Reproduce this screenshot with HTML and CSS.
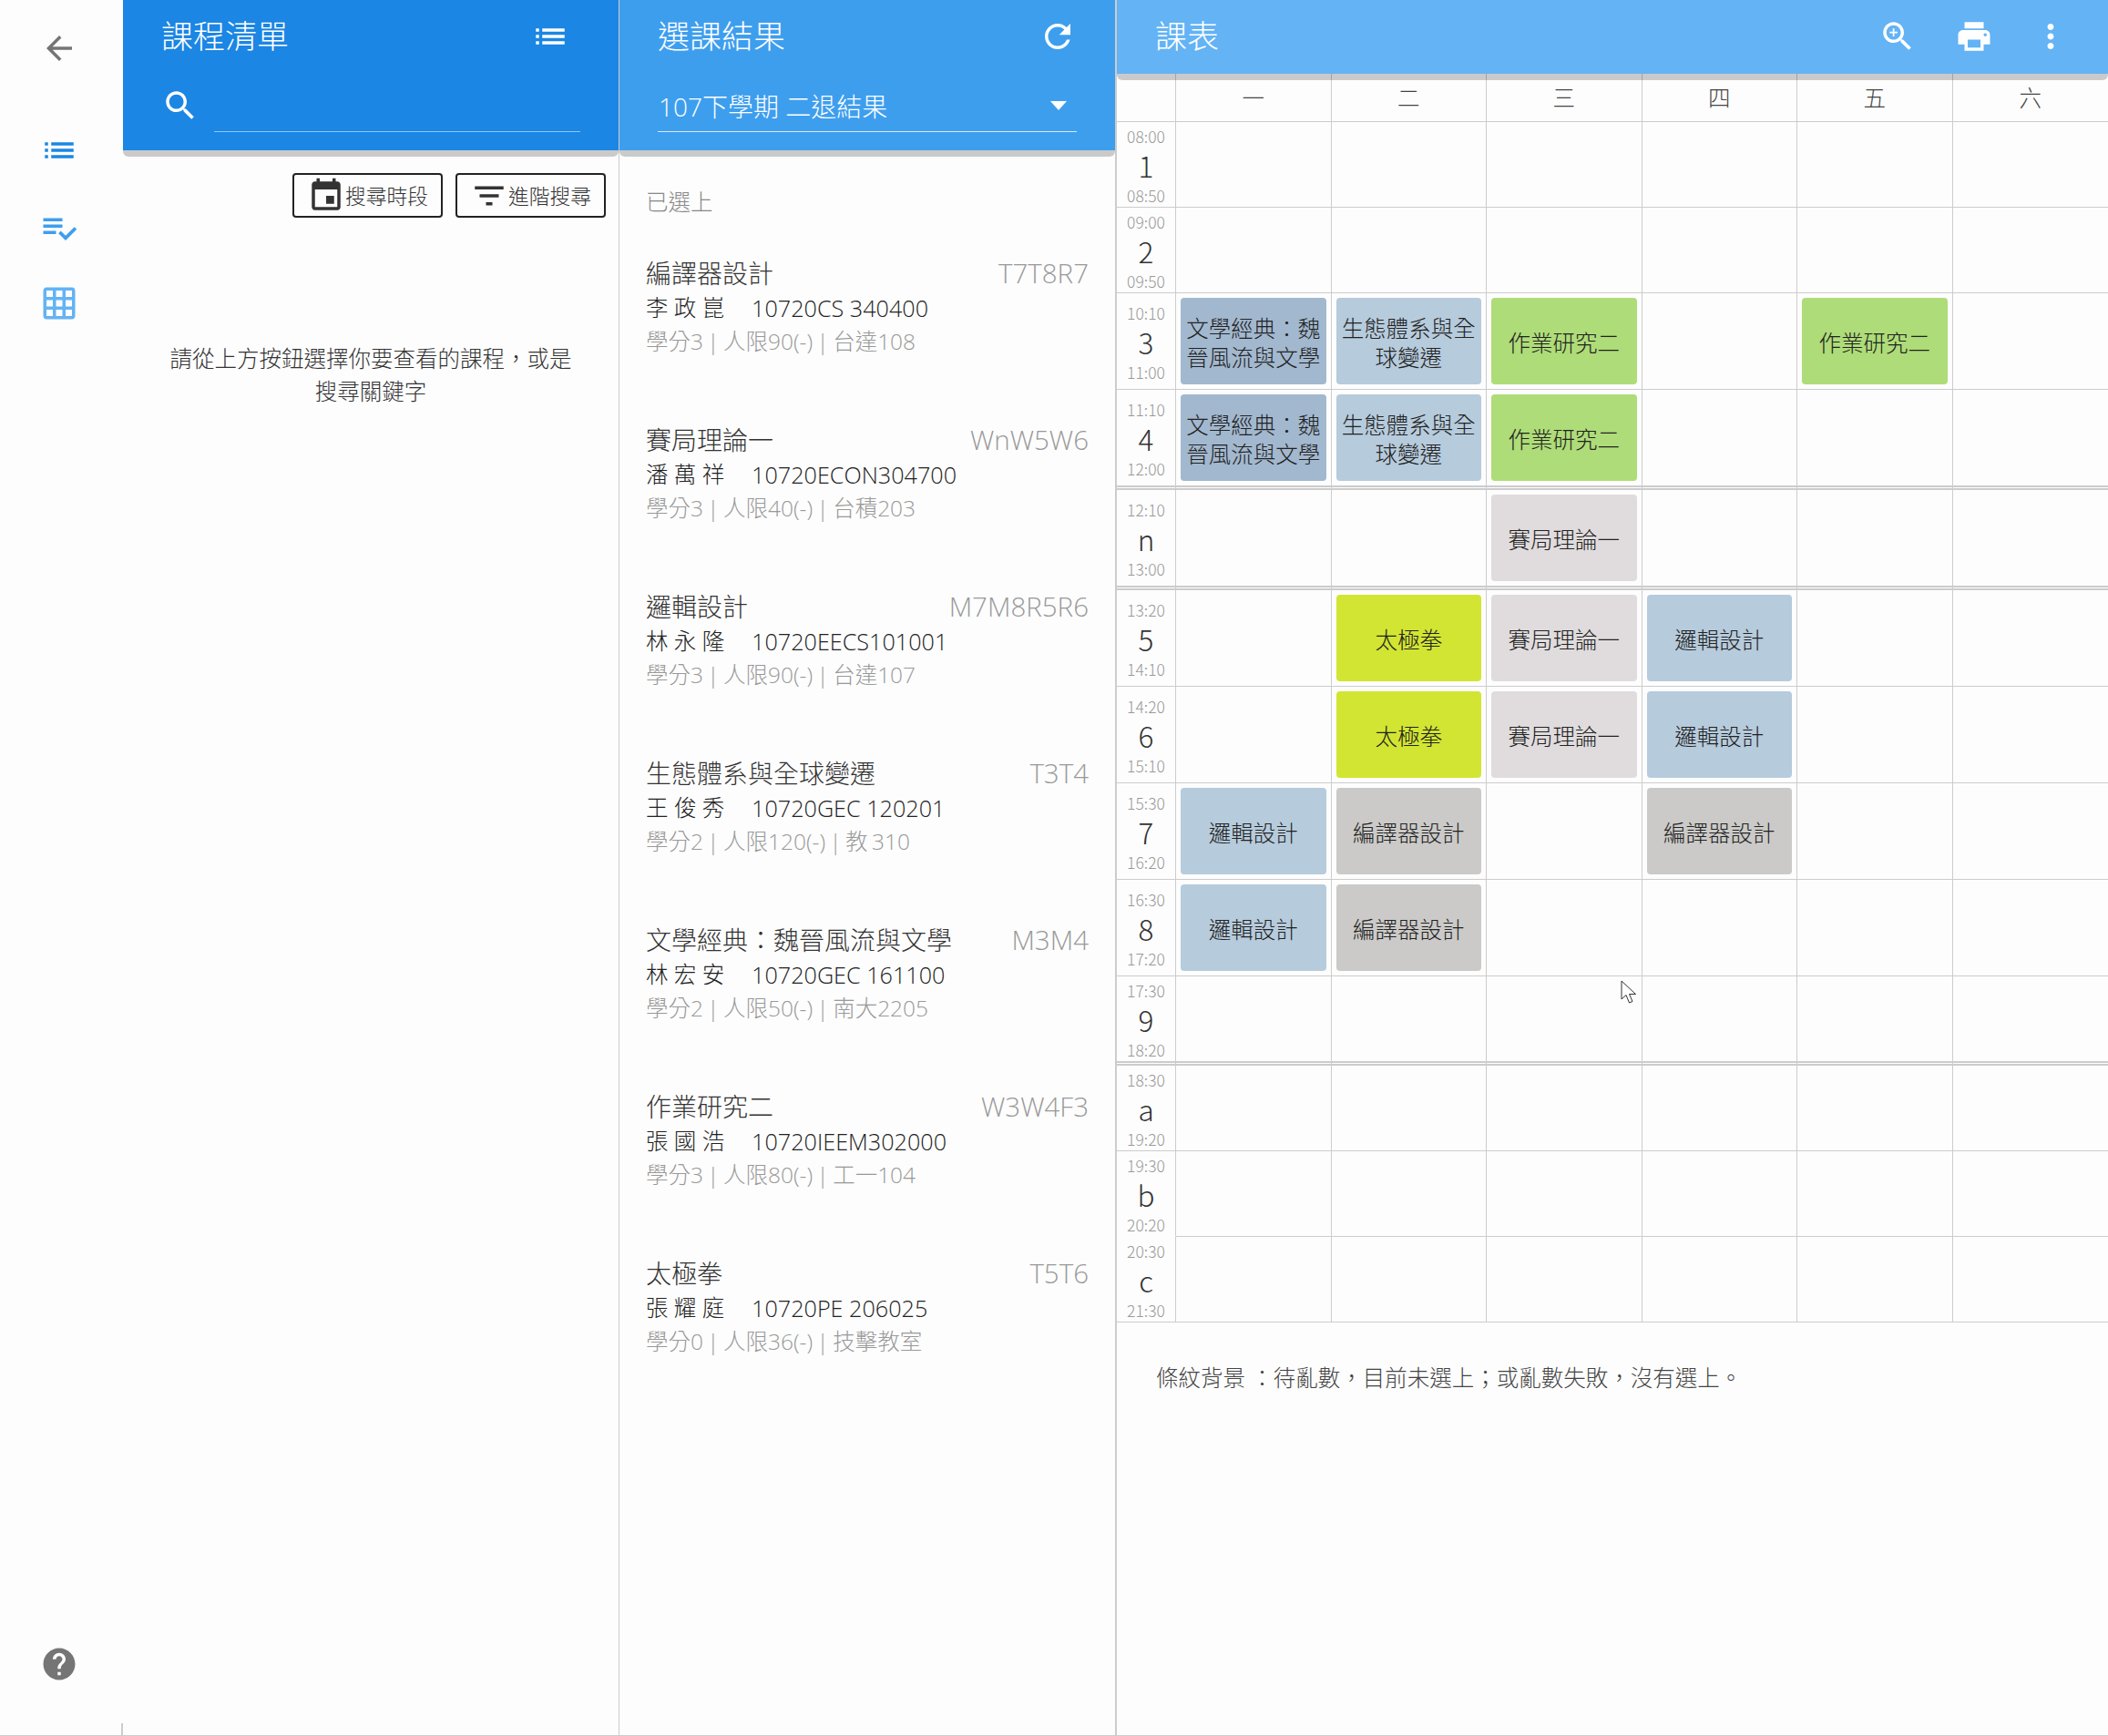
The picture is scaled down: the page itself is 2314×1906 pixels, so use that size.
FILE: index.html
```html
<!DOCTYPE html>
<html lang="zh-Hant">

<head>
  <meta charset="UTF-8">
  <title>課表</title>
  <link rel="stylesheet" href="styles.css">
</head>

<body>
  <div class="app">
    <nav class="sidebar">
      <svg class="icon back" viewBox="0 0 24 24"><path d="M20 11H7.83l5.59-5.59L12 4l-8 8 8 8 1.41-1.41L7.83 13H20v-2z"/></svg>
      <svg class="icon nav-list" viewBox="0 0 24 24"><path d="M3 13h2v-2H3v2zm0 4h2v-2H3v2zm0-8h2V7H3v2zm4 4h14v-2H7v2zm0 4h14v-2H7v2zM7 7v2h14V7H7z"/></svg>
      <svg class="icon nav-check" viewBox="0 0 24 24"><path d="M14 10H2v2h12v-2zm0-4H2v2h12V6zM2 16h8v-2H2v2zm19.5-4.5L23 13l-6.99 7-4.51-4.5L13 14l3.01 3 5.49-5.5z"/></svg>
      <svg class="icon nav-grid" viewBox="0 0 24 24"><path d="M20 2H4c-1.1 0-2 .9-2 2v16c0 1.1.9 2 2 2h16c1.1 0 2-.9 2-2V4c0-1.1-.9-2-2-2zM8 20H4v-4h4v4zm0-6H4v-4h4v4zm0-6H4V4h4v4zm6 12h-4v-4h4v4zm0-6h-4v-4h4v4zm0-6h-4V4h4v4zm6 12h-4v-4h4v4zm0-6h-4v-4h4v4zm0-6h-4V4h4v4z"/></svg>
      <svg class="icon help" viewBox="0 0 24 24"><path d="M12 2C6.48 2 2 6.48 2 12s4.48 10 10 10 10-4.48 10-10S17.52 2 12 2zm1 17h-2v-2h2v2zm2.07-7.75l-.9.92C13.45 12.9 13 13.5 13 15h-2v-.5c0-1.1.45-2.1 1.17-2.83l1.24-1.26c.37-.36.59-.86.59-1.41 0-1.1-.9-2-2-2s-2 .9-2 2H8c0-2.21 1.79-4 4-4s4 1.79 4 4c0 .88-.36 1.68-.93 2.25z"/></svg>
    </nav>

    <section class="panel panel-courses">
      <header class="bar bar-tall bar-dark">
        <div class="bar-row">
          <h2>課程清單</h2>
          <svg class="icon" viewBox="0 0 24 24"><path d="M3 13h2v-2H3v2zm0 4h2v-2H3v2zm0-8h2V7H3v2zm4 4h14v-2H7v2zm0 4h14v-2H7v2zM7 7v2h14V7H7z"/></svg>
        </div>
        <div class="search">
          <svg class="icon" viewBox="0 0 24 24"><path d="M15.5 14h-.79l-.28-.27C15.41 12.59 16 11.11 16 9.5 16 5.91 13.09 3 9.5 3S3 5.91 3 9.5 5.91 16 9.5 16c1.61 0 3.09-.59 4.23-1.57l.27.28v.79l5 4.99L20.49 19l-4.99-5zm-6 0C7.01 14 5 11.99 5 9.5S7.01 5 9.5 5 14 7.01 14 9.5 11.99 14 9.5 14z"/></svg>
          <div class="search-line"></div>
        </div>
      </header>
      <div class="actions">
        <button class="btn">
          <svg class="icon" viewBox="0 0 24 24"><path d="M17 12h-5v5h5v-5zM16 1v2H8V1H6v2H5c-1.11 0-1.99.9-1.99 2L3 19c0 1.1.89 2 2 2h14c1.1 0 2-.9 2-2V5c0-1.1-.9-2-2-2h-1V1h-2zm3 18H5V8h14v11z"/></svg>
          搜尋時段
        </button>
        <button class="btn">
          <svg class="icon" viewBox="0 0 24 24"><path d="M10 18h4v-2h-4v2zM3 6v2h18V6H3zm3 7h12v-2H6v2z"/></svg>
          進階搜尋
        </button>
      </div>
      <p class="hint">請從上方按鈕選擇你要查看的課程，或是搜尋關鍵字</p>
    </section>

    <section class="panel panel-results">
      <header class="bar bar-tall bar-mid">
        <div class="bar-row">
          <h2>選課結果</h2>
          <svg class="icon" viewBox="0 0 24 24"><path d="M17.65 6.35C16.2 4.9 14.21 4 12 4c-4.42 0-7.99 3.58-7.99 8s3.57 8 7.99 8c3.73 0 6.84-2.55 7.73-6h-2.08c-.82 2.33-3.04 4-5.65 4-3.31 0-6-2.69-6-6s2.69-6 6-6c1.66 0 3.14.69 4.22 1.78L13 11h7V4l-2.35 2.35z"/></svg>
        </div>
        <div class="select">
          <span>107下學期 二退結果</span>
          <i class="caret"></i>
        </div>
      </header>
      <div class="results">
        <h3 class="group">已選上</h3>
        <article class="course">
          <div class="course-top"><span class="course-name">編譯器設計</span><span class="course-time">T7T8R7</span></div>
          <div class="course-mid"><span class="teacher">李 政 崑</span><span class="course-code">10720CS 340400</span></div>
          <div class="course-info">學分3 | 人限90(-) | 台達108</div>
        </article>
        <article class="course">
          <div class="course-top"><span class="course-name">賽局理論一</span><span class="course-time">WnW5W6</span></div>
          <div class="course-mid"><span class="teacher">潘 萬 祥</span><span class="course-code">10720ECON304700</span></div>
          <div class="course-info">學分3 | 人限40(-) | 台積203</div>
        </article>
        <article class="course">
          <div class="course-top"><span class="course-name">邏輯設計</span><span class="course-time">M7M8R5R6</span></div>
          <div class="course-mid"><span class="teacher">林 永 隆</span><span class="course-code">10720EECS101001</span></div>
          <div class="course-info">學分3 | 人限90(-) | 台達107</div>
        </article>
        <article class="course">
          <div class="course-top"><span class="course-name">生態體系與全球變遷</span><span class="course-time">T3T4</span></div>
          <div class="course-mid"><span class="teacher">王 俊 秀</span><span class="course-code">10720GEC 120201</span></div>
          <div class="course-info">學分2 | 人限120(-) | 教 310</div>
        </article>
        <article class="course">
          <div class="course-top"><span class="course-name">文學經典：魏晉風流與文學</span><span class="course-time">M3M4</span></div>
          <div class="course-mid"><span class="teacher">林 宏 安</span><span class="course-code">10720GEC 161100</span></div>
          <div class="course-info">學分2 | 人限50(-) | 南大2205</div>
        </article>
        <article class="course">
          <div class="course-top"><span class="course-name">作業研究二</span><span class="course-time">W3W4F3</span></div>
          <div class="course-mid"><span class="teacher">張 國 浩</span><span class="course-code">10720IEEM302000</span></div>
          <div class="course-info">學分3 | 人限80(-) | 工一104</div>
        </article>
        <article class="course">
          <div class="course-top"><span class="course-name">太極拳</span><span class="course-time">T5T6</span></div>
          <div class="course-mid"><span class="teacher">張 耀 庭</span><span class="course-code">10720PE 206025</span></div>
          <div class="course-info">學分0 | 人限36(-) | 技擊教室</div>
        </article>
      </div>
    </section>

    <section class="panel panel-table">
      <header class="bar bar-light">
        <div class="bar-row">
          <h2>課表</h2>
          <div class="bar-icons">
            <svg class="icon" viewBox="0 0 24 24"><path d="M15.5 14h-.79l-.28-.27C15.41 12.59 16 11.11 16 9.5 16 5.91 13.09 3 9.5 3S3 5.91 3 9.5 5.91 16 9.5 16c1.61 0 3.09-.59 4.23-1.57l.27.28v.79l5 4.99L20.49 19l-4.99-5zm-6 0C7.01 14 5 11.99 5 9.5S7.01 5 9.5 5 14 7.01 14 9.5 11.99 14 9.5 14z"/><path d="M12 10h-2v2H9v-2H7V9h2V7h1v2h2v1z"/></svg>
            <svg class="icon" viewBox="0 0 24 24"><path d="M19 8H5c-1.66 0-3 1.34-3 3v6h4v4h12v-4h4v-6c0-1.66-1.34-3-3-3zm-3 11H8v-5h8v5zm3-7c-.55 0-1-.45-1-1s.45-1 1-1 1 .45 1 1-.45 1-1 1zm-1-9H6v4h12V3z"/></svg>
            <svg class="icon" viewBox="0 0 24 24"><path d="M12 8c1.1 0 2-.9 2-2s-.9-2-2-2-2 .9-2 2 .9 2 2 2zm0 2c-1.1 0-2 .9-2 2s.9 2 2 2 2-.9 2-2-.9-2-2-2zm0 6c-1.1 0-2 .9-2 2s.9 2 2 2 2-.9 2-2-.9-2-2-2z"/></svg>
          </div>
        </div>
      </header>

      <table class="timetable">
        <thead>
          <tr><th class="time"></th><th>一</th><th>二</th><th>三</th><th>四</th><th>五</th><th>六</th></tr>
        </thead>
        <tbody>
          <tr>
            <td class="time"><small>08:00</small><b>1</b><small>08:50</small></td>
            <td></td><td></td><td></td><td></td><td></td><td></td>
          </tr>
          <tr>
            <td class="time"><small>09:00</small><b>2</b><small>09:50</small></td>
            <td></td><td></td><td></td><td></td><td></td><td></td>
          </tr>
          <tr>
            <td class="time"><small>10:10</small><b>3</b><small>11:00</small></td>
            <td><div class="card c-lit">文學經典：魏晉風流與文學</div></td>
            <td><div class="card c-eco">生態體系與全球變遷</div></td>
            <td><div class="card c-or">作業研究二</div></td>
            <td></td>
            <td><div class="card c-or">作業研究二</div></td>
            <td></td>
          </tr>
          <tr class="break">
            <td class="time"><small>11:10</small><b>4</b><small>12:00</small></td>
            <td><div class="card c-lit">文學經典：魏晉風流與文學</div></td>
            <td><div class="card c-eco">生態體系與全球變遷</div></td>
            <td><div class="card c-or">作業研究二</div></td>
            <td></td><td></td><td></td>
          </tr>
          <tr class="break">
            <td class="time"><small>12:10</small><b>n</b><small>13:00</small></td>
            <td></td><td></td>
            <td><div class="card c-game">賽局理論一</div></td>
            <td></td><td></td><td></td>
          </tr>
          <tr>
            <td class="time"><small>13:20</small><b>5</b><small>14:10</small></td>
            <td></td>
            <td><div class="card c-tai">太極拳</div></td>
            <td><div class="card c-game">賽局理論一</div></td>
            <td><div class="card c-logic">邏輯設計</div></td>
            <td></td><td></td>
          </tr>
          <tr>
            <td class="time"><small>14:20</small><b>6</b><small>15:10</small></td>
            <td></td>
            <td><div class="card c-tai">太極拳</div></td>
            <td><div class="card c-game">賽局理論一</div></td>
            <td><div class="card c-logic">邏輯設計</div></td>
            <td></td><td></td>
          </tr>
          <tr>
            <td class="time"><small>15:30</small><b>7</b><small>16:20</small></td>
            <td><div class="card c-logic">邏輯設計</div></td>
            <td><div class="card c-comp">編譯器設計</div></td>
            <td></td>
            <td><div class="card c-comp">編譯器設計</div></td>
            <td></td><td></td>
          </tr>
          <tr>
            <td class="time"><small>16:30</small><b>8</b><small>17:20</small></td>
            <td><div class="card c-logic">邏輯設計</div></td>
            <td><div class="card c-comp">編譯器設計</div></td>
            <td></td><td></td><td></td><td></td>
          </tr>
          <tr class="break">
            <td class="time"><small>17:30</small><b>9</b><small>18:20</small></td>
            <td></td><td></td><td></td><td></td><td></td><td></td>
          </tr>
          <tr>
            <td class="time"><small>18:30</small><b>a</b><small>19:20</small></td>
            <td></td><td></td><td></td><td></td><td></td><td></td>
          </tr>
          <tr class="no-time-line">
            <td class="time"><small>19:30</small><b>b</b><small>20:20</small></td>
            <td></td><td></td><td></td><td></td><td></td><td></td>
          </tr>
          <tr>
            <td class="time"><small>20:30</small><b>c</b><small>21:30</small></td>
            <td></td><td></td><td></td><td></td><td></td><td></td>
          </tr>
        </tbody>
      </table>
      <p class="legend">條紋背景 ：待亂數，目前未選上；或亂數失敗，沒有選上。</p>
    </section>

    <svg class="cursor" viewBox="0 0 18 27"><path d="M1 1v20l5-4.500 3.500 8.500 3.500-1.500-3.500-8h7z"/></svg>
  </div>
</body>

</html>
```

FILE: styles.css
```css
* {
  box-sizing: border-box;
}

html,
body {
  height: 100%;
}

body {
  margin: 0;
  overflow: hidden;
  background: #fdfdfd;
  color: #333;
  font-family: "Open Sans", "Noto Sans CJK TC", sans-serif;
  font-size: 24.5px;
  font-weight: 300;
}

.app {
  position: relative;
  display: flex;
  height: 100%;
  border-bottom: 1px solid #ccc;
}

.icon {
  display: block;
  flex: none;
  width: 42px;
  height: 42px;
  fill: currentColor;
}

/* sidebar */

.sidebar {
  position: relative;
  display: flex;
  flex-direction: column;
  align-items: center;
  flex: none;
  width: 135px;
  padding: 32px 5px 0 0;
}

.sidebar::after {
  content: "";
  position: absolute;
  right: 0;
  bottom: 0;
  width: 2px;
  height: 13px;
  background: #ccc;
}

.back {
  color: #757575;
}

.nav-list {
  margin-top: 70px;
  color: #1b86e3;
}

.nav-check {
  margin-top: 43px;
  color: #3e9eee;
}

.nav-grid {
  margin-top: 41px;
  color: #63b3f5;
}

.help {
  margin-top: auto;
  margin-bottom: 57px;
  color: #757575;
}

/* panels */

.panel {
  position: relative;
  flex: none;
  width: 545px;
  border-right: 1px solid #ccc;
}

.panel-results {
  width: 546px;
  border-right-width: 2px;
}

.panel-table {
  flex: 1;
  border-right: 0;
}

.bar {
  position: relative;
  z-index: 2;
  height: 81px;
  padding: 0 30px 0 42px;
  color: #fff;
}

.bar::after {
  content: "";
  position: absolute;
  left: 0;
  right: 0;
  top: 100%;
  height: 7px;
  border-radius: 0 0 6px 6px;
  background: rgba(0, 0, 0, 0.2);
}

.bar-tall {
  height: 165px;
}

.bar-dark {
  background: #1b86e3;
}

.bar-mid {
  background: #3e9eee;
}

.bar-light {
  background: #63b3f5;
}

.bar-row {
  display: flex;
  justify-content: space-between;
  align-items: center;
  height: 80px;
}

.bar h2 {
  margin: 0 0 5px;
  font-size: 35px;
  font-weight: 300;
}

.bar-icons {
  display: flex;
  gap: 42px;
  margin-right: 12px;
}

.panel-courses .bar-row {
  padding-right: 24px;
}

.panel-results .bar-row {
  padding-right: 12px;
}

.search {
  display: flex;
  align-items: flex-start;
  gap: 16px;
  margin-top: 15px;
}

.search-line {
  width: 402px;
  height: 50px;
  border-bottom: 1px solid #90caf9;
}

.select {
  display: flex;
  justify-content: space-between;
  align-items: center;
  width: 460px;
  height: 65px;
  border-bottom: 1px solid #d6eafc;
  font-size: 28px;
  padding: 8px 11px 0 1px;
}

.caret {
  border: 9px solid transparent;
  border-top: 10px solid #fff;
  border-bottom: 0;
}

/* course list */

.actions {
  display: flex;
  justify-content: flex-end;
  gap: 14px;
  padding: 25px 14px 0 0;
}

.btn {
  display: flex;
  align-items: center;
  height: 49px;
  padding: 0 14px;
  border: 2px solid #222;
  border-radius: 4px;
  background: transparent;
  color: #333;
  font: inherit;
  font-size: 22.75px;
}

.hint {
  margin: 137px 44px 0;
  line-height: 36px;
  text-align: center;
}

/* results */

.results {
  padding: 30px 29px 0;
}

.group {
  margin: 0;
  color: #888;
  font-size: 24.5px;
  font-weight: 300;
  line-height: 54px;
}

.course {
  height: 183px;
  padding-top: 31px;
}

.course-top {
  display: flex;
  justify-content: space-between;
  align-items: baseline;
  font-size: 28px;
  line-height: 40px;
}

.course-time {
  color: #999;
  font-size: 29.5px;
}

.course-mid {
  display: flex;
  color: #222;
  line-height: 36px;
}

.course-code {
  font-size: 25.2px;
}

.teacher {
  width: 116px;
}

.course-info {
  padding-top: 1px;
  color: #999;
  line-height: 36px;
  word-spacing: -2px;
}

/* timetable */

.timetable {
  position: absolute;
  top: 81px;
  left: 0;
  width: 1088px;
  table-layout: fixed;
  border-collapse: separate;
  border-spacing: 0;
}

.timetable th,
.timetable td {
  border-right: 1px solid #ccc;
  border-bottom: 1px solid #ccc;
  padding: 5px;
}

.timetable th:last-child,
.timetable td:last-child {
  border-right: 0;
}

.timetable th {
  height: 53px;
  padding: 0 0 2px;
  color: #444;
  font-size: 24.5px;
  font-weight: 300;
}

.timetable td {
  height: 94px;
  vertical-align: middle;
}

.timetable .time {
  width: 65px;
  padding: 4px 0 0;
  font-family: "Noto Sans CJK TC", sans-serif;
  text-align: center;
}

.time small,
.time b {
  display: block;
}

.time small {
  color: #999;
  font-size: 17.5px;
  line-height: 24px;
}

.time b {
  padding-bottom: 2px;
  font-size: 31.500px;
  font-weight: 300;
  line-height: 39px;
}

.break td {
  border-bottom: 5px double #ccc;
}

.no-time-line .time {
  border-bottom-color: transparent;
}

.card {
  display: flex;
  align-items: center;
  justify-content: center;
  height: 95px;
  padding-top: 5px;
  border-radius: 4px;
  color: #222;
  line-height: 32px;
  text-align: center;
}

.c-lit {
  background: #a2b8cf;
}

.c-eco,
.c-logic {
  background: #b6cbdc;
}

.c-or {
  background: #aedc78;
}

.c-game {
  background: #e0dcdd;
}

.c-tai {
  background: #d2e532;
}

.c-comp {
  background: #cbcac8;
}

.legend {
  position: absolute;
  top: 1495px;
  left: 43px;
  margin: 0;
  color: #444;
  line-height: 36px;
  white-space: pre;
}

.cursor {
  position: absolute;
  left: 1779px;
  top: 1076px;
  width: 18px;
  height: 27px;
  fill: #fff;
  stroke: #333;
  stroke-width: 1;
}
```
